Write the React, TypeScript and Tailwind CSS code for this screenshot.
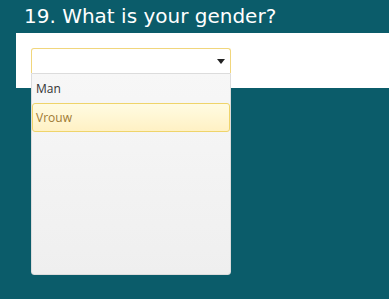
export default function App() {
  return (
    <div className="h-[299px] w-[389px] overflow-hidden bg-[#0b5c6a]">
      <h1 className="pl-6 pt-[3px] font-['DejaVu_Sans',sans-serif] text-[20px] leading-[26px] text-white">
        19. What is your gender?
      </h1>
      <div className="relative mt-1 ml-4 h-[55px] bg-white">
        <div className="absolute left-[15px] top-[15px] w-[200px] font-['Open_Sans',sans-serif]">
          <div className="flex h-[25px] items-center justify-end rounded-t-[3px] border border-b-0 border-[#f1d67c] bg-white pr-[5px]">
            <svg width="8" height="5" viewBox="0 0 8 5">
              <path d="M0 0h8L4 5z" fill="#222" />
            </svg>
          </div>
          <div className="h-[202px] rounded-b-[3px] border border-[#dcdcdc] bg-gradient-to-b from-[#f7f7f7] to-[#efefef]">
            <div className="flex h-[29px] items-center pl-[4px] text-[12px] text-[#333]">
              Man
            </div>
            <div className="flex h-[29px] items-center rounded-[3px] border border-[#efd46a] bg-gradient-to-b from-[#fffbe2] to-[#fff1c4] pl-[3px] text-[12px] text-[#a07a34]">
              Vrouw
            </div>
          </div>
        </div>
      </div>
    </div>
  );
}
